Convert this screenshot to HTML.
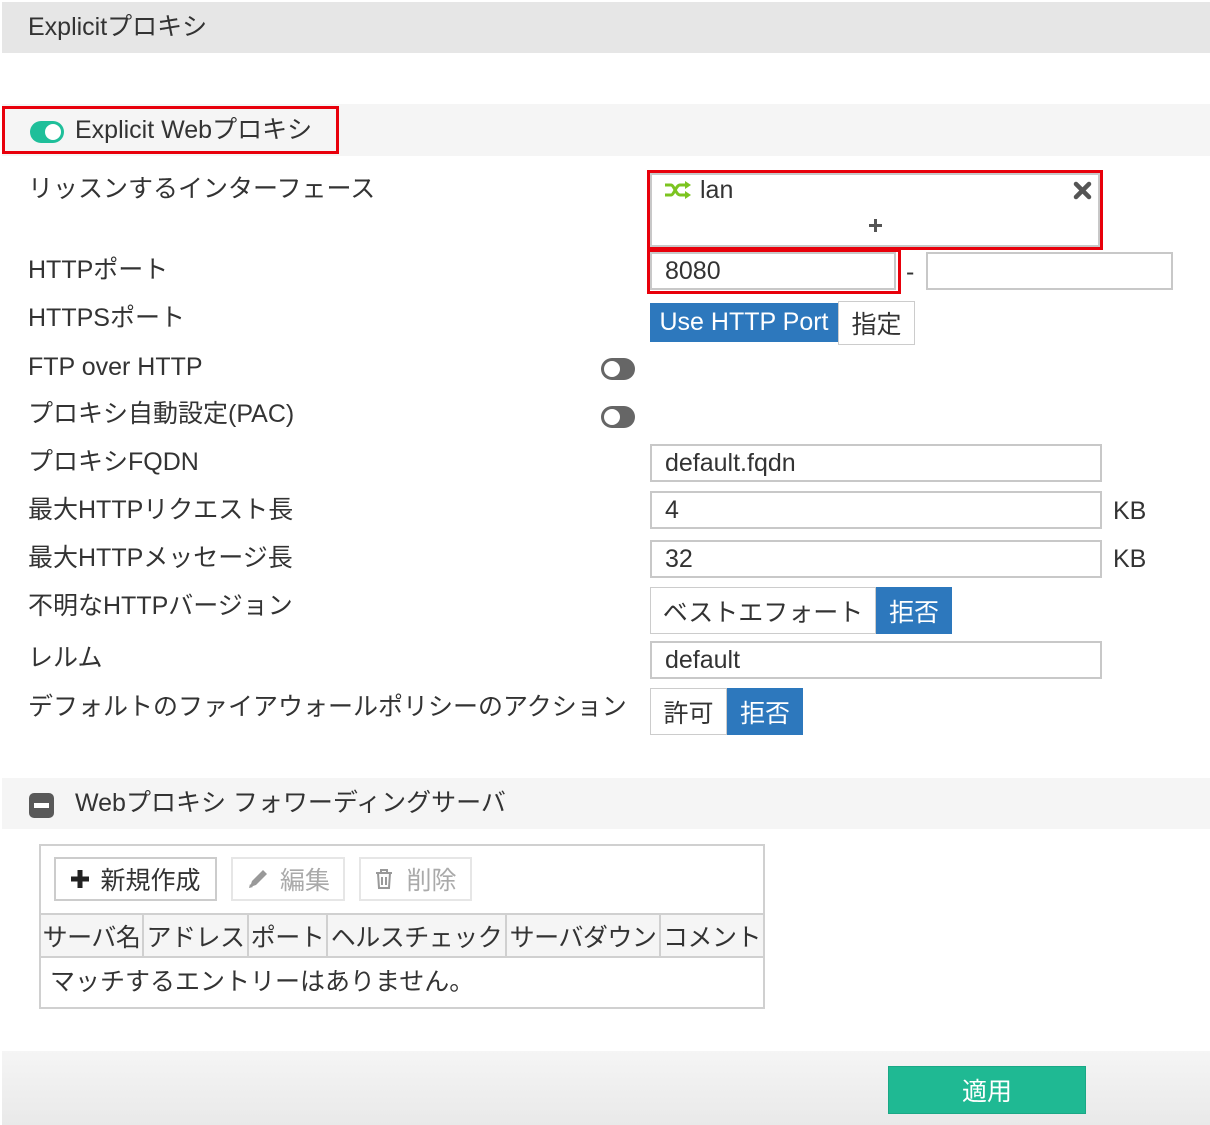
<!DOCTYPE html>
<html><head><meta charset="utf-8">
<style>
*{box-sizing:border-box;margin:0;padding:0}
body{width:1210px;height:1125px;position:relative;background:#fff;font-family:"Liberation Sans","Noto Sans CJK JP",sans-serif;color:#333;overflow:hidden}
.a{position:absolute}
.t{font-size:25px;white-space:nowrap;line-height:1}
.lbl{position:absolute;left:28px;font-size:25px;line-height:1;white-space:nowrap;color:#333}
.inp{position:absolute;border:2px solid #c8c8c8;background:#fff;font-size:24px;padding-left:13px;display:flex;align-items:center;color:#333}
.btn{position:absolute;display:flex;align-items:center;justify-content:center;font-size:25px;border:1px solid #ccc;background:#fff;color:#333;white-space:nowrap}
.blue{background:#2d78bd;color:#fff;border-color:#2d78bd}
.red{position:absolute;border:3px solid #e8000b}
.tog{position:absolute;width:34px;height:22px;border-radius:11px;background:#666}
.tog i{position:absolute;left:3px;top:3px;width:16px;height:16px;border-radius:50%;background:#fff}
.th{position:absolute;top:914px;height:43px;border-right:2px solid #d0d0d0;font-size:25px;display:flex;align-items:center;justify-content:center;white-space:nowrap;color:#333;overflow:visible;letter-spacing:-0.5px}
</style></head><body>

<div class="a" style="left:2px;top:2px;width:1208px;height:51px;background:#e6e6e6"></div>
<div class="a t" style="left:28px;top:15px;color:#333">Explicitプロキシ</div>

<div class="a" style="left:2px;top:104px;width:1208px;height:52px;background:#f5f5f5"></div>
<div class="red" style="left:2px;top:106px;width:337px;height:48px"></div>
<div class="a" style="left:30px;top:121px;width:34px;height:22px;border-radius:11px;background:#1fbf9a"><i class="a" style="left:15px;top:3px;width:16px;height:16px;border-radius:50%;background:#fff"></i></div>
<div class="a t" style="left:75px;top:118px">Explicit Webプロキシ</div>

<div class="lbl" style="top:177px">リッスンするインターフェース</div>
<div class="lbl" style="top:258px">HTTPポート</div>
<div class="lbl" style="top:306px">HTTPSポート</div>
<div class="lbl" style="top:355px">FTP over HTTP</div>
<div class="lbl" style="top:402px">プロキシ自動設定(PAC)</div>
<div class="lbl" style="top:450px">プロキシFQDN</div>
<div class="lbl" style="top:498px">最大HTTPリクエスト長</div>
<div class="lbl" style="top:546px">最大HTTPメッセージ長</div>
<div class="lbl" style="top:594px">不明なHTTPバージョン</div>
<div class="lbl" style="top:646px">レルム</div>
<div class="lbl" style="top:695px">デフォルトのファイアウォールポリシーのアクション</div>

<div class="a" style="left:650px;top:173px;width:450px;height:74px;border:2px solid #c8c8c8;background:#fff"></div>
<div class="red" style="left:647px;top:170px;width:456px;height:80px"></div>
<svg class="a" style="left:664px;top:181px" width="28" height="18" viewBox="0 0 28 18"><g fill="none" stroke="#7cc420" stroke-width="3"><path d="M1 4h6c3 0 5 10 9 10h6"/><path d="M1 14h6c3 0 5-10 9-10h6"/></g><path d="M21 0l6 4-6 4zM21 10l6 4-6 4z" fill="#7cc420"/></svg>
<div class="a t" style="left:700px;top:178px">lan</div>
<svg class="a" style="left:1073px;top:181px" width="19" height="19" viewBox="0 0 19 19"><path d="M3 3l13 13M16 3L3 16" stroke="#555" stroke-width="4.5" stroke-linecap="round"/></svg>
<svg class="a" style="left:868px;top:218px" width="15" height="15" viewBox="0 0 15 15"><path d="M7.5 1v13M1 7.5h13" stroke="#555" stroke-width="3"/></svg>

<div class="inp" style="left:650px;top:252px;width:246px;height:38px;font-size:25px">8080</div>
<div class="red" style="left:647px;top:249px;width:254px;height:45px"></div>
<div class="a t" style="left:906px;top:260px">-</div>
<div class="inp" style="left:926px;top:252px;width:247px;height:38px"></div>

<div class="btn blue" style="left:650px;top:303px;width:188px;height:39px">Use HTTP Port</div>
<div class="btn" style="left:838px;top:301px;width:77px;height:44px">指定</div>

<div class="tog" style="left:601px;top:358px"><i></i></div>
<div class="tog" style="left:601px;top:406px"><i></i></div>

<div class="inp" style="left:650px;top:444px;width:452px;height:38px;font-size:25px">default.fqdn</div>
<div class="inp" style="left:650px;top:491px;width:452px;height:38px;font-size:25px">4</div>
<div class="a t" style="left:1113px;top:499px">KB</div>
<div class="inp" style="left:650px;top:540px;width:452px;height:38px;font-size:25px">32</div>
<div class="a t" style="left:1113px;top:547px">KB</div>

<div class="btn" style="left:650px;top:587px;width:226px;height:47px">ベストエフォート</div>
<div class="btn blue" style="left:876px;top:587px;width:76px;height:47px">拒否</div>
<div class="inp" style="left:650px;top:641px;width:452px;height:38px;font-size:25px">default</div>
<div class="btn" style="left:650px;top:688px;width:77px;height:47px">許可</div>
<div class="btn blue" style="left:727px;top:688px;width:76px;height:47px">拒否</div>

<div class="a" style="left:2px;top:778px;width:1208px;height:51px;background:#f5f5f5"></div>
<div class="a" style="left:29px;top:793px;width:25px;height:25px;border-radius:5px;background:#595959"><i class="a" style="left:5px;top:10px;width:15px;height:5px;background:#fff"></i></div>
<div class="a t" style="left:75px;top:791px">Webプロキシ フォワーディングサーバ</div>

<div class="a" style="left:39px;top:844px;width:726px;height:165px;border:2px solid #d0d0d0;background:#fff"></div>
<div class="btn" style="left:54px;top:857px;width:163px;height:44px;border:2px solid #ccc">
<svg width="20" height="20" viewBox="0 0 20 20" style="margin-right:10px"><path d="M10 1v18M1 10h18" stroke="#222" stroke-width="5"/></svg>新規作成</div>
<div class="btn" style="left:231px;top:857px;width:114px;height:44px;border:2px solid #e6e6e6;color:#aaa">
<svg width="24" height="24" viewBox="0 0 24 24" style="margin-right:10px"><path d="M4 20l2-6L17 3l4 4L10 18z" fill="#999"/><path d="M3 21l1-4 3 3z" fill="#999"/></svg>編集</div>
<div class="btn" style="left:359px;top:857px;width:113px;height:44px;border:2px solid #e6e6e6;color:#aaa">
<svg width="20" height="22" viewBox="0 0 20 22" style="margin-right:12px"><g fill="none" stroke="#999" stroke-width="2"><path d="M2 5h16M7 5V2h6v3M4 5l1 15h10l1-15M8 9v8M12 9v8"/></g></svg>削除</div>

<div class="a" style="left:41px;top:913px;width:722px;height:45px;background:#f5f5f5;border-top:2px solid #d0d0d0;border-bottom:2px solid #d0d0d0"></div>
<div class="th" style="left:41px;width:103px">サーバ名</div>
<div class="th" style="left:144px;width:105px">アドレス</div>
<div class="th" style="left:249px;width:79px">ポート</div>
<div class="th" style="left:328px;width:179px">ヘルスチェック</div>
<div class="th" style="left:507px;width:154px">サーバダウン</div>
<div class="th" style="left:661px;width:102px;border-right:none">コメント</div>
<div class="a t" style="left:50px;top:970px">マッチするエントリーはありません。</div>

<div class="a" style="left:2px;top:1051px;width:1208px;height:74px;background:linear-gradient(#f5f5f5,#e9e9e9)"></div>
<div class="btn" style="left:888px;top:1066px;width:198px;height:48px;background:#1fb993;border-color:#1aa886;color:#fff">適用</div>

</body></html>
